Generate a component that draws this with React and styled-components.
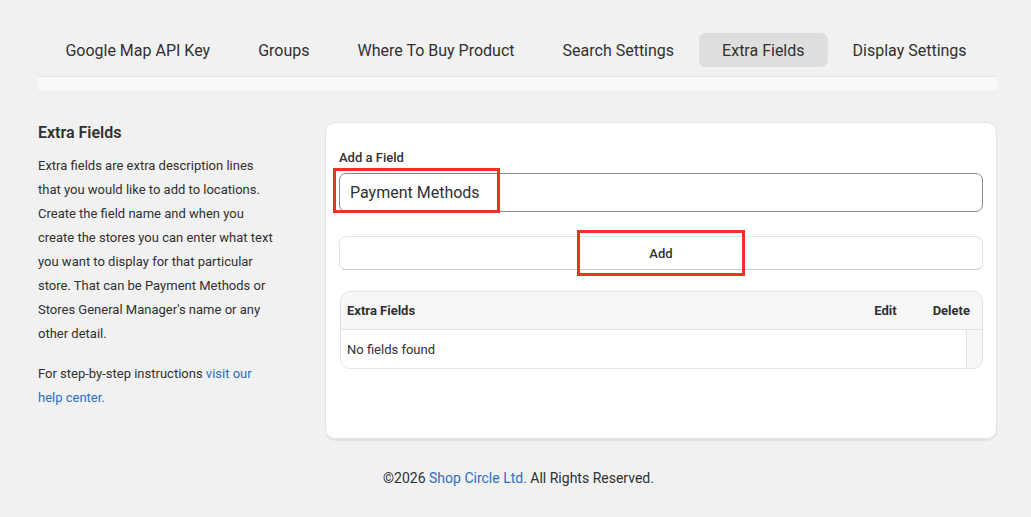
import React, { useState } from 'react'
import styled, { createGlobalStyle } from 'styled-components'

const GlobalStyle = createGlobalStyle`
  html, body {
    margin: 0;
    padding: 0;
    background: #f1f1f1;
    font-family: Roboto, "Liberation Sans", Arial, sans-serif;
    color: #303030;
  }
  * { box-sizing: border-box; }
`

const Page = styled.div`
  min-height: 517px;
  padding: 33px 33px 0 38px;
`
const TabBar = styled.div`
  display: flex;
  justify-content: center;
  gap: 2px;
  margin-left: -4px;
`
const Tab = styled.div`
  height: 34px;
  padding: 0 23px;
  display: flex;
  align-items: center;
  font-size: 16px;
  color: #303030;
  border-radius: 7px;
  cursor: pointer;
  background: ${({ active }) => (active ? '#dedede' : 'transparent')};
`
const Strip = styled.div`
  margin-top: 9px;
  height: 14px;
  background: #f9f9f9;
  border-top: 1px solid #e6e6e6;
`
const Layout = styled.div`
  display: grid;
  grid-template-columns: 267px 672px;
  gap: 20px;
  margin-top: 32px;
`
const Aside = styled.div`
  display: flex;
  flex-direction: column;
  max-width: 238px;
  padding-top: 1px;
`
const AsideTitle = styled.div`
  font-size: 16px;
  line-height: 20px;
  font-weight: 600;
  color: #303030;
`
const AsideText = styled.p`
  margin: ${({ first }) => (first ? '11px' : '16px')} 0 0;
  font-size: 13px;
  line-height: 24px;
  color: #303030;
`
const Link = styled.a`
  color: #2a6fc2;
  text-decoration: none;
`
const Card = styled.div`
  background: #fff;
  border: 1px solid #e4e4e4;
  border-radius: 10px;
  box-shadow: 0 2px 1px rgba(0, 0, 0, 0.06);
  padding: 27px 13px 69px 13px;
`
const Label = styled.div`
  font-size: 13px;
  line-height: 16px;
  font-weight: 500;
  color: #303030;
  margin-bottom: 7px;
`
const Annotated = styled.div`
  position: relative;
`
const Highlight = styled.div`
  position: absolute;
  left: ${({ x }) => x}px;
  top: ${({ y }) => y}px;
  width: ${({ w }) => w}px;
  height: ${({ h }) => h}px;
  border: 3px solid #ee3322;
  pointer-events: none;
`
const Input = styled.input`
  display: block;
  width: 100%;
  height: 39px;
  padding: 0 10px;
  border: 1px solid #8a8a8a;
  border-radius: 7px;
  font-family: inherit;
  font-size: 16px;
  color: #303030;
  background: #fff;
  outline: none;
`
const ButtonRow = styled.div`
  position: relative;
  margin-top: 24px;
`
const Button = styled.button`
  display: block;
  width: 100%;
  height: 34px;
  border: 1px solid #e3e3e3;
  border-bottom-color: #c9c9c9;
  border-radius: 7px;
  background: #fff;
  font-family: inherit;
  font-size: 13px;
  font-weight: 500;
  color: #303030;
  cursor: pointer;
`
const Table = styled.div`
  margin-top: 21px;
  margin-left: 1px;
  border: 1px solid #e3e3e3;
  border-radius: 10px;
  overflow: hidden;
  background: #f7f7f7;
`
const HeadRow = styled.div`
  display: flex;
  align-items: center;
  height: 38px;
  padding: 0 12px 0 6px;
  font-size: 13px;
  font-weight: 700;
  color: #303030;
  border-bottom: 1px solid #e3e3e3;
`
const HeadCell = styled.div`
  flex: ${({ grow }) => (grow ? 1 : 'none')};
  margin-left: ${({ gap }) => gap || 0}px;
`
const BodyRow = styled.div`
  display: flex;
  align-items: center;
  height: 38px;
  margin-right: 15px;
  padding: 0 6px;
  background: #fff;
  border-right: 1px solid #e3e3e3;
  font-size: 13px;
  color: #303030;
`
const Footer = styled.div`
  margin-top: 30px;
  text-align: center;
  font-size: 14px;
  line-height: 18px;
  color: #303030;
  padding-left: 1px;
`

const tabs = [
  'Google Map API Key',
  'Groups',
  'Where To Buy Product',
  'Search Settings',
  'Extra Fields',
  'Display Settings',
]

const App = () => {
  const [active, setActive] = useState('Extra Fields')
  const [value, setValue] = useState('Payment Methods')
  return (
    <>
      <GlobalStyle />
      <Page>
        <TabBar>
          {tabs.map((t) => (
            <Tab key={t} active={active === t} onClick={() => setActive(t)}>
              {t}
            </Tab>
          ))}
        </TabBar>
        <Strip />
        <Layout>
          <Aside>
            <AsideTitle>Extra Fields</AsideTitle>
            <AsideText first>
              Extra fields are extra description lines that you would like to add to locations. Create the field name and when you create the stores you can enter what text you want to display for that particular store. That can be Payment Methods or Stores General Manager's name or any other detail.
            </AsideText>
            <AsideText>
              For step-by-step instructions <Link href="#">visit our help center.</Link>
            </AsideText>
          </Aside>
          <Card>
            <Label>Add a Field</Label>
            <Annotated>
              <Input value={value} onChange={(e) => setValue(e.target.value)} />
              <Highlight x={-6} y={-5} w={167} h={45} />
            </Annotated>
            <ButtonRow>
              <Button>Add</Button>
              <Highlight x={238} y={-6} w={168} h={46} />
            </ButtonRow>
            <Table>
              <HeadRow>
                <HeadCell grow>Extra Fields</HeadCell>
                <HeadCell>Edit</HeadCell>
                <HeadCell gap={36}>Delete</HeadCell>
              </HeadRow>
              <BodyRow>No fields found</BodyRow>
            </Table>
          </Card>
        </Layout>
        <Footer>
          ©2026 <Link href="#">Shop Circle Ltd.</Link> All Rights Reserved.
        </Footer>
      </Page>
    </>
  )
}

export default App
